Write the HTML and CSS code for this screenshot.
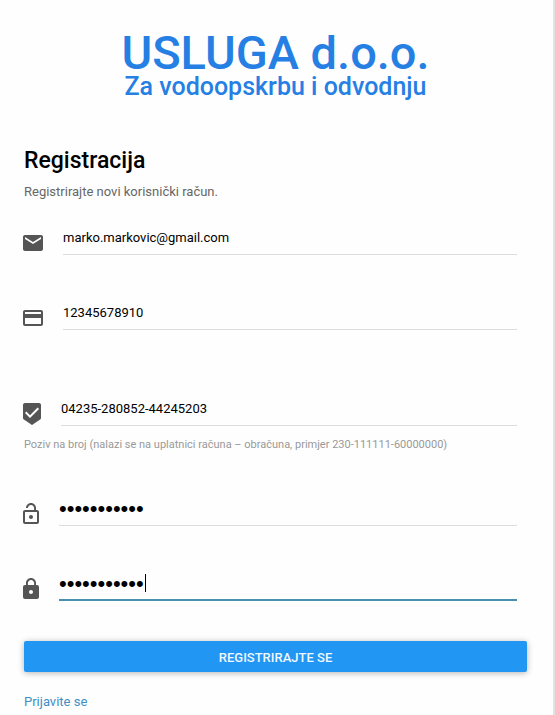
FILE: index.html
```html
<!DOCTYPE html>
<html lang="hr">
<head>
    <meta charset="UTF-8">
    <meta name="viewport" content="width=device-width, initial-scale=1.0">
    <title>Registracija</title>
    <link rel="stylesheet" href="styles.css">
</head>
<body>
    <main class="panel">
        <header class="logo">
            <div class="logo-name">USLUGA d.o.o.</div>
            <div class="logo-tagline">Za vodoopskrbu i odvodnju</div>
        </header>

        <h1>Registracija</h1>
        <p class="intro">Registrirajte novi korisnički račun.</p>

        <form id="registrationForm">
            <div class="field">
                <label for="email" aria-label="Email">
                    <svg class="icon" width="20" height="24" viewBox="2 0 20 24"><path d="M20 4H4c-1.1 0-1.99.9-1.99 2L2 18c0 1.1.9 2 2 2h16c1.1 0 2-.9 2-2V6c0-1.1-.9-2-2-2zm0 4l-8 5-8-5V6l8 5 8-5v2z"/></svg>
                </label>
                <input type="text" id="email" name="email" value="marko.markovic@gmail.com">
            </div>

            <div class="field field-oib">
                <label for="oib" aria-label="OIB">
                    <svg class="icon" width="20" height="24" viewBox="2 0 20 24"><path d="M20 4H4c-1.11 0-1.99.89-1.99 2L2 18c0 1.11.89 2 2 2h16c1.11 0 2-.89 2-2V6c0-1.11-.89-2-2-2zm0 14H4v-6h16v6zm0-10H4V6h16v2z"/></svg>
                </label>
                <input type="text" id="oib" name="oib" value="12345678910">
            </div>

            <div class="field field-reference">
                <label for="reference" aria-label="Poziv na broj">
                    <svg class="icon" width="18" height="24" viewBox="3 0 18 24"><path d="M19 1H5c-1.1 0-1.99.9-1.99 2L3 15.93c0 .69.35 1.3.88 1.66L12 23l8.11-5.41c.53-.36.88-.97.88-1.66L21 3c0-1.1-.9-2-2-2zm-9 15l-5-5 1.41-1.41L10 13.17l7.59-7.59L19 7l-9 9z"/></svg>
                </label>
                <input type="text" id="reference" name="reference" value="04235-280852-44245203">
            </div>
            <p class="hint">Poziv na broj (nalazi se na uplatnici računa – obračuna, primjer 230-111111-60000000)</p>

            <div class="field">
                <label for="password" aria-label="Lozinka">
                    <svg class="icon" width="16" height="24" viewBox="4 0 16 24"><path d="M12 17c1.1 0 2-.9 2-2s-.9-2-2-2-2 .9-2 2 .9 2 2 2zm6-9h-1V6c0-2.76-2.24-5-5-5S7 3.24 7 6h1.9c0-1.71 1.39-3.1 3.1-3.1 1.71 0 3.1 1.39 3.1 3.1v2H6c-1.1 0-2 .9-2 2v10c0 1.1.9 2 2 2h12c1.1 0 2-.9 2-2V10c0-1.1-.9-2-2-2zm0 12H6V10h12v10z"/></svg>
                </label>
                <input type="password" id="password" name="password" value="lozinka1234">
            </div>

            <div class="field active">
                <label for="confirm" aria-label="Ponovite lozinku">
                    <svg class="icon" width="16" height="24" viewBox="4 0 16 24"><path d="M18 8h-1V6c0-2.76-2.24-5-5-5S7 3.24 7 6v2H6c-1.1 0-2 .9-2 2v10c0 1.1.9 2 2 2h12c1.1 0 2-.9 2-2V10c0-1.1-.9-2-2-2zm-6 9c-1.1 0-2-.9-2-2s.9-2 2-2 2 .9 2 2-.9 2-2 2zm3.1-9H8.9V6c0-1.71 1.39-3.1 3.1-3.1 1.71 0 3.1 1.39 3.1 3.1v2z"/></svg>
                </label>
                <input type="password" id="confirm" name="confirm" value="lozinka1234">
                <span class="caret"></span>
            </div>

            <button type="submit">REGISTRIRAJTE SE</button>
        </form>

        <a class="login" href="#">Prijavite se</a>
    </main>
</body>
</html>
```

FILE: styles.css
```css
* {
    box-sizing: border-box;
}

body {
    margin: 0;
    font-family: Roboto, Arial, sans-serif;
    font-size: 13px;
    color: #000;
    background-color: #fefefe;
}

.panel {
    min-height: 100vh;
    padding: 30px 26px 0 24px;
    border-right: 2px solid #e3e1e3;
}

.logo {
    text-align: center;
    font-weight: 500;
    color: #2680e4;
}

.logo-name {
    font-size: 47px;
    line-height: 45px;
}

.logo-tagline {
    font-size: 25px;
    line-height: 24px;
}

h1 {
    margin: 46px 0 0;
    font-size: 23px;
    line-height: 32px;
    font-weight: 500;
}

.intro {
    margin: 7px 0 21px;
    line-height: 16px;
    color: #666;
}

.field {
    display: flex;
    align-items: flex-end;
    position: relative;
    height: 34px;
    margin-bottom: 41px;
    padding-right: 10px;
}

.field label {
    margin-left: -1px;
    margin-right: 20px;
}

.field-oib {
    margin-bottom: 62px;
}

.field-reference {
    margin-bottom: 10px;
}

.icon {
    display: block;
    fill: #555;
}

input {
    flex: 1;
    min-width: 0;
    height: 33px;
    margin: 0;
    padding: 0 0 1px;
    border: none;
    border-bottom: 1px solid #ddd;
    border-radius: 0;
    outline: none;
    background: transparent;
    font-family: inherit;
    font-size: 13px;
    color: #000;
}

input[type="password"] {
    font-family: "Liberation Sans", Arial, sans-serif;
    font-size: 22px;
}

.active input {
    padding-bottom: 0;
    border-bottom: 2px solid #4990b0;
}

/* text cursor after the last typed character */
.caret {
    position: absolute;
    left: 121px;
    top: 7px;
    width: 1px;
    height: 18px;
    background-color: #000;
}

.hint {
    margin: 0 0 39px;
    font-size: 11px;
    line-height: 17px;
    color: #999;
}

button {
    display: block;
    width: 100%;
    height: 31px;
    margin: -1px 0 22px;
    padding: 1px 0 0;
    border: none;
    border-radius: 2px;
    background-color: #2196f3;
    box-shadow: 0 1px 6px rgba(0,0,0,0.3);
    font-family: inherit;
    font-size: 13px;
    font-weight: 500;
    color: #f0f8ff;
    cursor: pointer;
}

.login {
    line-height: 16px;
    color: #3f8fc6;
    text-decoration: none;
}
```
